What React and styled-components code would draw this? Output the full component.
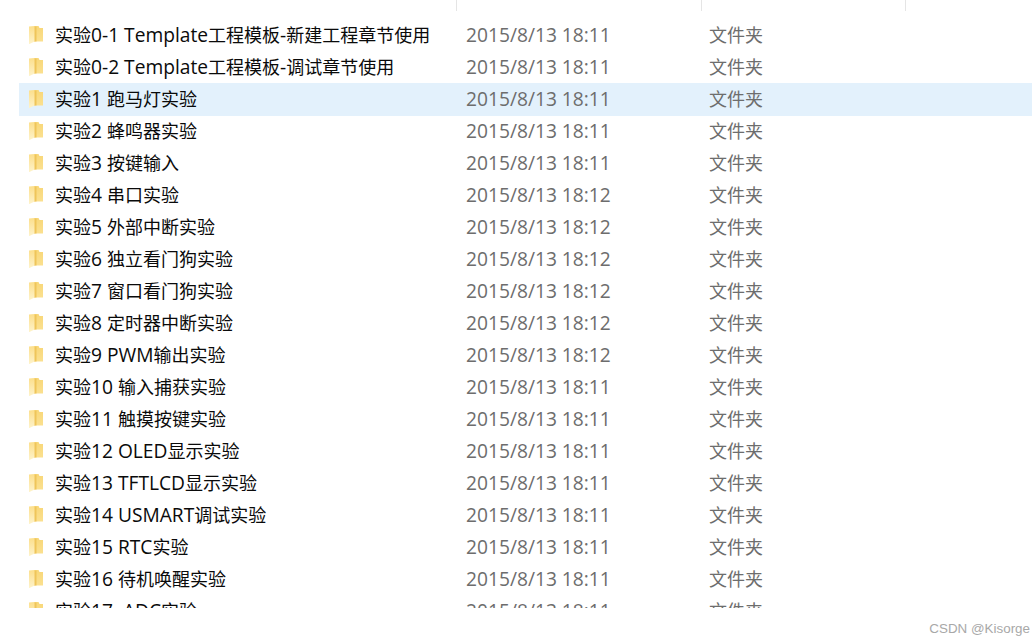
import styled, { createGlobalStyle } from "styled-components";

const folders = [
  ["实验0-1 Template工程模板-新建工程章节使用", "18:11"],
  ["实验0-2 Template工程模板-调试章节使用", "18:11"],
  ["实验1 跑马灯实验", "18:11", true],
  ["实验2 蜂鸣器实验", "18:11"],
  ["实验3 按键输入", "18:11"],
  ["实验4 串口实验", "18:12"],
  ["实验5 外部中断实验", "18:12"],
  ["实验6 独立看门狗实验", "18:12"],
  ["实验7 窗口看门狗实验", "18:12"],
  ["实验8 定时器中断实验", "18:12"],
  ["实验9 PWM输出实验", "18:12"],
  ["实验10 输入捕获实验", "18:11"],
  ["实验11 触摸按键实验", "18:11"],
  ["实验12 OLED显示实验", "18:11"],
  ["实验13 TFTLCD显示实验", "18:11"],
  ["实验14 USMART调试实验", "18:11"],
  ["实验15 RTC实验", "18:11"],
  ["实验16 待机唤醒实验", "18:11"],
  ["实验17  ADC实验", "18:11"],
];

const GlobalStyle = createGlobalStyle`
  html, body {
    margin: 0;
    height: 100%;
    background: #fff;
    overflow: hidden;
  }
  body {
    font-family: "Open Sans", "Noto Sans CJK SC", sans-serif;
  }
`;

const Page = styled.div`
  position: relative;
  width: 1035px;
  height: 644px;
`;

const HeaderStub = styled.div`
  display: grid;
  grid-template-columns: 457px 245px 204px;
  height: 11px;
  margin-bottom: 8px;
`;

const HeaderCell = styled.div`
  border-right: 1px solid #e5e5e5;
`;

const List = styled.div`
  height: 589px;
  margin-left: 19px;
  width: 1013px;
  overflow: hidden;
`;

const Row = styled.div`
  display: grid;
  grid-template-columns: 447px 243px 1fr;
  align-items: start;
  height: ${(p) => (p.$selected ? "33px" : "32px")};
  margin-bottom: ${(p) => (p.$selected ? "-1px" : "0")};
  background: ${(p) => (p.$selected ? "#e3f1fc" : "transparent")};
  font-size: 18px;
  line-height: 32px;
  white-space: nowrap;
`;

const NameCell = styled.div`
  display: flex;
  align-items: center;
  gap: 11px;
  height: 32px;
  padding-left: 9px;
  color: #0a0a0a;
`;

const Latin = styled.span`
  font-size: 19.2px;
  white-space: pre;
`;

const DateCell = styled.div`
  color: #6d6d6d;
  font-size: 19.2px;
`;

const TypeCell = styled.div`
  color: #6d6d6d;
`;

const Watermark = styled.div`
  position: absolute;
  right: 5px;
  bottom: 8px;
  font-family: "Liberation Sans", sans-serif;
  font-size: 13.4px;
  color: #a8a8a8;
`;

function FolderIcon() {
  return (
    <svg width="16" height="20" viewBox="0 0 16 20" style={{ flex: "none" }}>
      <defs>
        <linearGradient id="folderFront" x1="0" y1="0" x2="0" y2="1">
          <stop offset="0" stopColor="#fcdf8c" />
          <stop offset="1" stopColor="#fef3cb" />
        </linearGradient>
        <linearGradient id="folderBack" x1="0" y1="0" x2="0" y2="1">
          <stop offset="0" stopColor="#f8d778" />
          <stop offset="1" stopColor="#fbe08f" />
        </linearGradient>
      </defs>
      {/* back panel */}
      <path d="M6 1h4.5l1 2H15v13.5H6z" fill="url(#folderBack)" />
      {/* darker fold */}
      <path d="M6 1.5h2.5v15H6z" fill="#efc55a" />
      {/* front flap */}
      <path d="M1 1.5 6.5 1v15.5L1.5 19H1z" fill="url(#folderFront)" />
    </svg>
  );
}

// latin runs are rendered a bit bigger than the CJK ones, as in the original
function Name({ text }) {
  return text
    .split(/([\x00-\x7f]+)/)
    .map((part, i) => (i % 2 ? <Latin key={i}>{part}</Latin> : part));
}

export default function App() {
  return (
    <Page>
      <GlobalStyle />
      <HeaderStub>
        <HeaderCell />
        <HeaderCell />
        <HeaderCell />
      </HeaderStub>
      <List>
        {folders.map(([name, time, selected]) => (
          <Row key={name} $selected={selected}>
            <NameCell>
              <FolderIcon />
              <span>
                <Name text={name} />
              </span>
            </NameCell>
            <DateCell>2015/8/13 {time}</DateCell>
            <TypeCell>文件夹</TypeCell>
          </Row>
        ))}
      </List>
      <Watermark>CSDN @Kisorge</Watermark>
    </Page>
  );
}
